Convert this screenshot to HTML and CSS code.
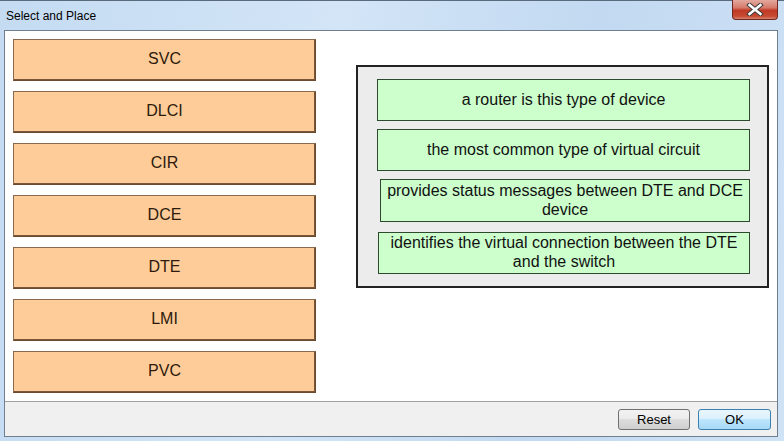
FILE: index.html
```html
<!DOCTYPE html>
<html lang="en">

<head>
    <meta charset="UTF-8">
    <title>Select and Place</title>
    <link rel="stylesheet" href="styles.css">
</head>

<body>
    <div class="window">
        <div class="title-bar">
            <span class="title">Select and Place</span>
            <button class="close-btn" aria-label="Close">
                <svg width="22" height="13" viewBox="0 0 22 13">
                    <path d="M5.5 2 L16.5 11 M16.5 2 L5.5 11" stroke="#3b3b3b" stroke-width="4.5" stroke-linecap="square" fill="none"/>
                    <path d="M5.5 2 L16.5 11 M16.5 2 L5.5 11" stroke="#fff" stroke-width="2.5" stroke-linecap="square" fill="none"/>
                </svg>
            </button>
        </div>

        <div class="client">
            <div class="board">
                <!-- draggable answers -->
                <div class="choices">
                    <div class="choice">SVC</div>
                    <div class="choice">DLCI</div>
                    <div class="choice">CIR</div>
                    <div class="choice">DCE</div>
                    <div class="choice">DTE</div>
                    <div class="choice">LMI</div>
                    <div class="choice">PVC</div>
                </div>

                <!-- drop targets -->
                <div class="targets">
                    <div class="target">a router is this type of device</div>
                    <div class="target">the most common type of virtual circuit</div>
                    <div class="target target-shift">provides status messages between DTE and DCE device</div>
                    <div class="target target-nudge">identifies the virtual connection between the DTE and the switch</div>
                </div>
            </div>

            <div class="footer">
                <button class="btn">Reset</button>
                <button class="btn btn-default">OK</button>
            </div>
        </div>
    </div>
</body>

</html>
```

FILE: styles.css
```css
html,
body {
    margin: 0;
    padding: 0;
}

body {
    width: 784px;
    height: 441px;
    overflow: hidden;
    font-family: 'Liberation Sans', Arial, sans-serif;
    background: linear-gradient(100deg, #c4dbf2 0%, #d3e5f7 40%, #c2d9f1 70%, #cfe2f6 100%);
}

.window {
    height: 441px;
    border-top: 1px solid #5a6b7d;
    box-sizing: border-box;
    display: flex;
    flex-direction: column;
}

.title-bar {
    height: 29px;
    display: flex;
    justify-content: space-between;
    align-items: flex-start;
}

.title {
    font-size: 12px;
    color: #000;
    margin: 8px 0 0 6px;
}

.close-btn {
    width: 46px;
    height: 20px;
    margin: -1px 6px 0 0;
    padding: 0;
    border: 1px solid #6e2a22;
    border-top: none;
    border-radius: 0 0 4px 4px;
    background: linear-gradient(#e3a99f 0%, #d77a6b 40%, #c03a24 55%, #c54a33 85%, #d8806c 100%);
    display: flex;
    align-items: center;
    justify-content: center;
}

.client {
    margin: 0 6px 4px 4px;
    flex: 1;
    display: flex;
    flex-direction: column;
    background: #fff;
    border: 1px solid #6f7f90;
}

.board {
    flex: 1;
    display: flex;
    align-items: flex-start;
    padding: 8px 0 0 8px;
}

.choices {
    width: 303px;
    display: flex;
    flex-direction: column;
    gap: 10px;
}

.choice {
    height: 42px;
    box-sizing: border-box;
    display: flex;
    align-items: center;
    justify-content: center;
    background: #fdcc99;
    border: 1px solid #6b4a30;
    border-top-color: #8a6a4e;
    border-left-color: #8a6a4e;
    box-shadow: inset -1px -1px 0 #7a5636;
    color: #2d1a0c;
    font-size: 16px;
    padding-bottom: 2px;
}

.targets {
    width: 413px;
    height: 223px;
    margin: 26px 0 0 40px;
    box-sizing: border-box;
    border: 2px solid #222;
    background: #ececec;
    padding: 12px 0 0 19px;
    display: flex;
    flex-direction: column;
    gap: 8px;
}

.target {
    width: 373px;
    height: 42px;
    box-sizing: border-box;
    display: flex;
    align-items: center;
    justify-content: center;
    text-align: center;
    background: #ccffcc;
    border: 1px solid #2e4a2e;
    color: #111;
    font-size: 16px;
    line-height: 19px;
    padding: 0 4px 2px;
}

.target-shift {
    width: 370px;
    height: 43px;
    margin: 0 0 2px 3px;
}

.target-nudge {
    width: 372px;
    margin-left: 1px;
}

.footer {
    height: 35px;
    box-sizing: border-box;
    border-top: 1px solid #a0a0a0;
    background: #f0f0f0;
    display: flex;
    justify-content: flex-end;
    align-items: flex-start;
    gap: 8px;
    padding: 7px 6px 0 0;
}

.btn {
    width: 72px;
    height: 21px;
    padding: 0;
    font-family: 'Liberation Sans', Arial, sans-serif;
    font-size: 13px;
    color: #000;
    border: 1px solid #707070;
    border-radius: 3px;
    background: linear-gradient(#f2f2f2 0%, #ebebeb 49%, #dddddd 50%, #cfcfcf 100%);
}

.btn-default {
    width: 73px;
    border-color: #3c7fb1;
    background: linear-gradient(#eaf6fd 0%, #d9f0fc 49%, #bee6fd 50%, #a7d9f5 100%);
}
```
